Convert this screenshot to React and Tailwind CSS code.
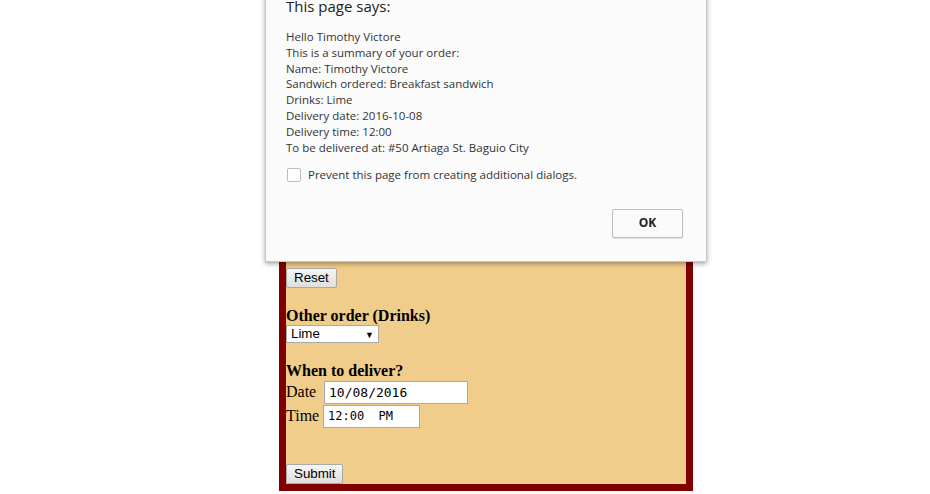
export default function App() {
  const btn =
    "h-[20px] px-[7px] rounded-[2px] border border-[#a9a9a9] bg-gradient-to-b from-[#f6f6f6] to-[#dedede] text-[13.33px] leading-[18px] text-black";
  return (
    <div className="relative w-[930px] h-[494px] overflow-hidden bg-white" style={{ fontFamily: '"Liberation Serif", serif' }}>
      {/* form box */}
      <div className="ml-[279px] w-[414px] border-[7px] border-t-0 border-[#800000] bg-[#f1cd8b] pt-[268px] text-black">
        <div className="flex flex-col items-start">
          <button className={btn} style={{ fontFamily: '"Liberation Sans", Arial, sans-serif' }}>Reset</button>
          <div className="mt-[18px] h-[19px] text-[16px] leading-[19px] font-bold">Other order (Drinks)</div>
          <div
            className="relative w-[93px] h-[18px] bg-white border border-[#a9a9a9] text-[13.33px] leading-[16px] pl-[4px]"
            style={{ fontFamily: '"Liberation Sans", Arial, sans-serif' }}
          >
            Lime
            <span className="absolute right-[4px] top-[1px] text-[9px]">▼</span>
          </div>
          <div className="mt-[18px] h-[19px] text-[16px] leading-[19px] font-bold">When to deliver?</div>
          <div className="flex items-center h-[24px] text-[16px]">
            <span className="w-[38px]">Date</span>
            <div
              className="w-[144px] h-[23px] bg-white border border-[#a9a9a9] pl-[4px] text-[13px] leading-[21px] whitespace-pre"
              style={{ fontFamily: '"DejaVu Sans Mono", "Liberation Mono", monospace' }}
            >
              10/08/2016
            </div>
          </div>
          <div className="flex items-center h-[24px] text-[16px]">
            <span className="w-[37px]">Time</span>
            <div
              className="w-[97px] h-[23px] bg-white border border-[#a9a9a9] pl-[4px] text-[12px] leading-[21px] whitespace-pre"
              style={{ fontFamily: '"DejaVu Sans Mono", "Liberation Mono", monospace' }}
            >
              12:00  PM
            </div>
          </div>
          <button className={`${btn} mt-[36px]`} style={{ fontFamily: '"Liberation Sans", Arial, sans-serif' }}>Submit</button>
        </div>
      </div>

      {/* alert dialog */}
      <div
        className="absolute left-[265px] top-[-20px] w-[442px] h-[282px] bg-[#fbfbfb] border border-[#c8c8c8] rounded-b-[2px] shadow-[0_2px_5px_rgba(0,0,0,0.35)] text-[#333333]"
        style={{ fontFamily: '"Open Sans", "Noto Sans", sans-serif' }}
      >
        <div className="pl-[20px] pt-[15px]">
          <div className="text-[15px] leading-[20px] text-[#222]">This page says:</div>
          <div className="mt-[13px] text-[11.5px] leading-[15.8px]">
            <div>Hello Timothy Victore</div>
            <div>This is a summary of your order:</div>
            <div>Name: Timothy Victore</div>
            <div>Sandwich ordered: Breakfast sandwich</div>
            <div>Drinks: Lime</div>
            <div>Delivery date: 2016-10-08</div>
            <div>Delivery time: 12:00</div>
            <div>To be delivered at: #50 Artiaga St. Baguio City</div>
          </div>
          <div className="mt-[11px] flex items-center gap-[7px] text-[11.5px]">
            <span className="w-[14px] h-[14px] border border-[#bdbdbd] rounded-[2px] bg-white ml-[1px]" />
            <span>Prevent this page from creating additional dialogs.</span>
          </div>
        </div>
        <div className="flex justify-end pr-[23px] mt-[25px]">
          <button className="w-[71px] h-[29px] border border-[#bdbdbd] rounded-[2px] bg-[#fafafa] shadow-[0_1px_1px_rgba(0,0,0,0.1)] text-[12px] font-bold text-[#222]">
            OK
          </button>
        </div>
      </div>
    </div>
  );
}
